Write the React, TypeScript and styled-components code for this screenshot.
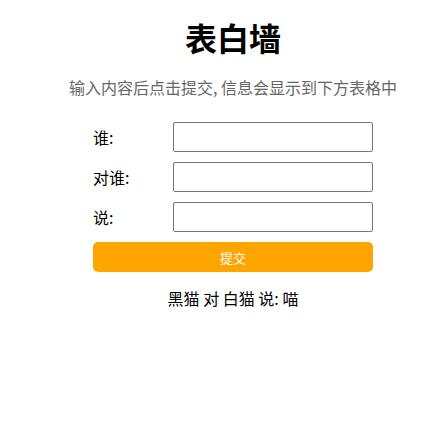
import React, { useState } from 'react'
import styled, { createGlobalStyle } from 'styled-components'

const GlobalStyle = createGlobalStyle`
   html {
      overflow: hidden;
   }
   body {
      margin: 8px;
      background: #fff;
      font-family: "Noto Sans CJK SC", "Noto Sans", sans-serif;
      color: #000;
   }
`

interface IMessage {
   from: string;
   to: string;
   text: string;
}

export default function App() {
   const [messages] = useState<IMessage[]>([
      { from: '黑猫', to: '白猫', text: '喵' },
   ])

   return (
      <>
         <GlobalStyle />
         <Container>
            <Title>表白墙</Title>
            <Hint>输入内容后点击提交, 信息会显示到下方表格中</Hint>

            <Row>
               <Label>谁:</Label>
               <Input type="text" />
            </Row>
            <Row>
               <Label>对谁:</Label>
               <Input type="text" />
            </Row>
            <Row>
               <Label>说:</Label>
               <Input type="text" />
            </Row>
            <Row>
               <SubmitButton>提交</SubmitButton>
            </Row>

            {messages.map((m, i) => (
               <Message key={i}>{m.from} 对 {m.to} 说: {m.text}</Message>
            ))}
         </Container>
      </>
   )
}


const Container = styled.div`
   width: 450px;
   margin: 0 auto;
`

const Title = styled.h1`
   text-align: center;
   font-size: 32px;
   font-weight: bold;
   margin: 6px 0 15px;
`

const Hint = styled.p`
   text-align: center;
   color: #666;
   font-size: 16px;
   margin: 0 0 23px;
`

const Row = styled.div`
   width: 280px;
   height: 30px;
   margin: 10px auto;
   display: flex;
   align-items: center;
`

const Label = styled.span`
   width: 80px;
   font-size: 16px;
`

const Input = styled.input`
   box-sizing: border-box;
   width: 200px;
   height: 30px;
   border: 1px solid #767676;
   border-radius: 2px;
   padding: 0 4px;
`

const SubmitButton = styled.button`
   width: 280px;
   height: 30px;
   border: none;
   border-radius: 5px;
   background-color: orange;
   color: #fff;
   font-family: inherit;
   font-size: 13px;
`

const Message = styled.div`
   text-align: center;
   font-size: 16px;
   margin-top: 14px;
`
